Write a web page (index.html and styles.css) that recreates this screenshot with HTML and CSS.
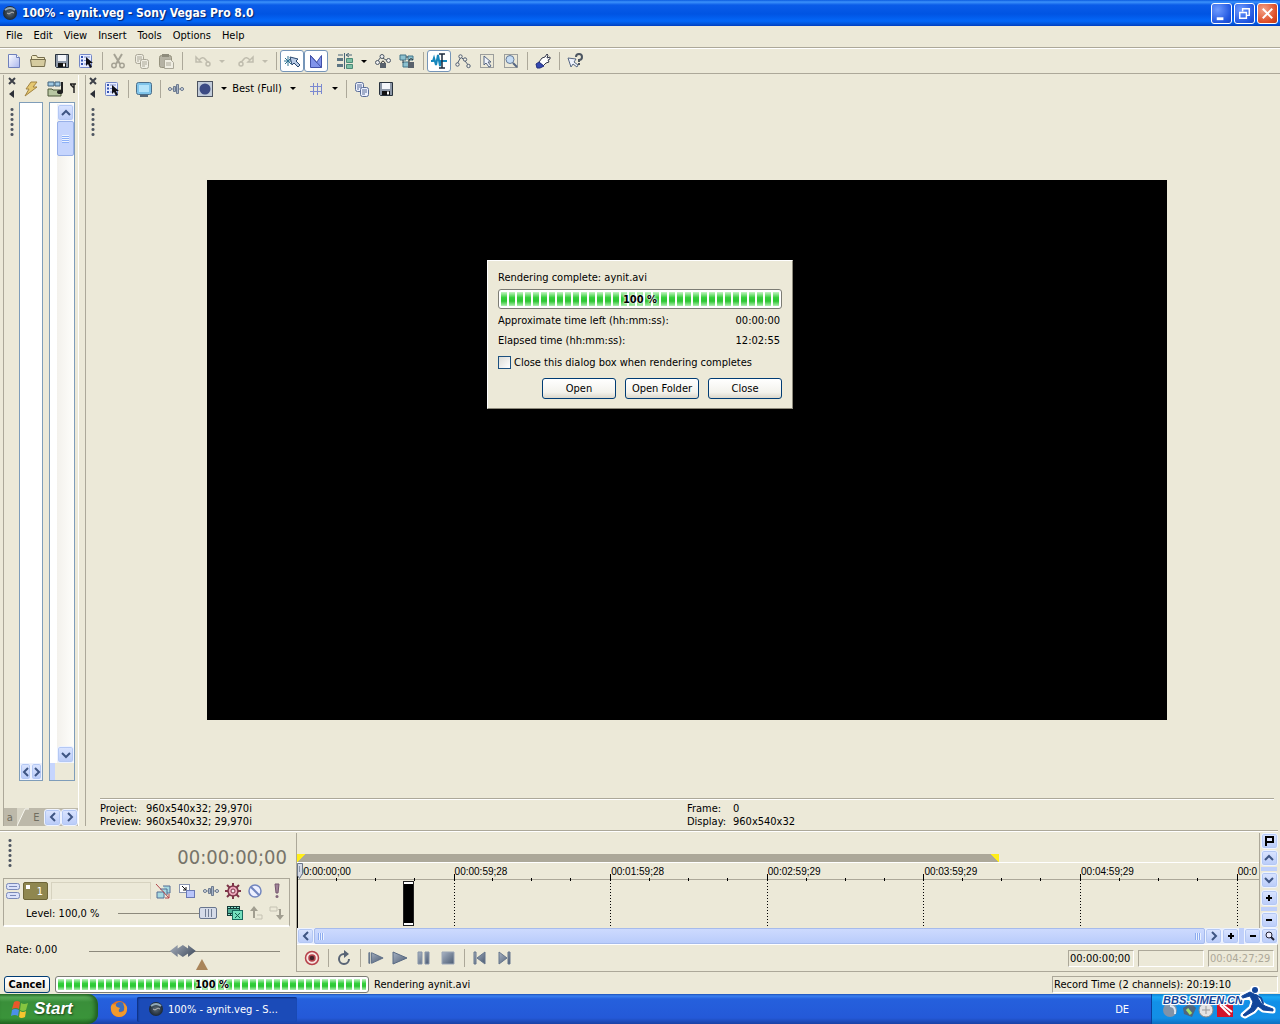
FILE: index.html
```html
<!DOCTYPE html>
<html lang="en">
<head>
<meta charset="utf-8">
<title>100% - aynit.veg - Sony Vegas Pro 8.0</title>
<link rel="stylesheet" href="styles.css">
</head>
<body>
<svg class="defs" aria-hidden="true">
  <defs>
    <linearGradient id="steel" x1="0" y1="0" x2="1" y2="1"><stop offset="0" stop-color="#a9b4c4"/><stop offset="1" stop-color="#4a5a72"/></linearGradient>
    <linearGradient id="page" x1="0" y1="0" x2="1" y2="1"><stop offset="0" stop-color="#fff"/><stop offset="1" stop-color="#a9b6ee"/></linearGradient>
    <radialGradient id="orb"><stop offset="0" stop-color="#5b6a78"/><stop offset="1" stop-color="#1b2733"/></radialGradient>
  </defs>
  <symbol id="app" viewBox="0 0 16 16"><circle cx="8" cy="8" r="7" fill="url(#orb)"/><path d="M3 5Q8 1 13 5" stroke="#91a9b8" stroke-width="2" fill="none"/><path d="M5 8l2 1 3-2 2 1" stroke="#b8b8b8" fill="none"/></symbol>
  <symbol id="new" viewBox="0 0 16 16"><path d="M2.500 1.500h8l3 3v10h-11z" fill="url(#page)" stroke="#6f80bb"/><path d="M10.500 1.500v3h3" fill="#fff" stroke="#6f80bb"/></symbol>
  <symbol id="open" viewBox="0 0 16 16"><path d="M1.500 13.500v-10l1-1h4l1 2h7v3" fill="#efe7c0" stroke="#756d4c"/><path d="M.5 6.500h15l-1 7h-13z" fill="#d5cb9f" stroke="#756d4c"/></symbol>
  <symbol id="save" viewBox="0 0 16 16"><path d="M1.500 1.500h13v13h-12l-1-1z" fill="#8d98a8" stroke="#28323d"/><path d="M4 2h8v6H4z" fill="#f4f6fa"/><path d="M4 10h8v4H4z" fill="#111"/><path d="M9 10.500h2v3H9z" fill="#fff"/></symbol>
  <symbol id="props" viewBox="0 0 16 16"><rect x="1.500" y="1.500" width="12" height="13" rx="1" fill="#e8edff" stroke="#7286c6"/><path d="M3 4h2M3 7.500h2M3 11h2" stroke="#3454b2" stroke-width="2"/><path d="M6 4h6M6 7.500h3M6 11h2" stroke="#8093cf"/><path d="M8 4v9l2-2 2 4 2-1-2-4h3z" fill="#101018"/></symbol>
  <symbol id="cut" viewBox="0 0 16 16"><path d="M4 1l6 10M12 1L6 11" stroke="#a5a294" stroke-width="2"/><circle cx="4" cy="12.500" r="2.200" fill="none" stroke="#a5a294" stroke-width="1.500"/><circle cx="12" cy="12.500" r="2.200" fill="none" stroke="#a5a294" stroke-width="1.500"/></symbol>
  <symbol id="copyg" viewBox="0 0 16 16"><g fill="#efede2" stroke="#aaa798"><rect x="1.500" y="1.500" width="8" height="9" rx="2"/><path d="M3 4h5M3 6h5M3 8h2"/><rect x="6.500" y="6.500" width="8" height="9" rx="2"/><path d="M8 9h5M8 11h5M8 13h3"/></g></symbol>
  <symbol id="copy" viewBox="0 0 16 16"><g fill="#edf1ff" stroke="#596d98"><rect x="1.500" y="1.500" width="8" height="9" rx="2"/><path d="M3 4h5M3 6h5M3 8h2"/><rect x="6.500" y="6.500" width="8" height="9" rx="2"/><path d="M8 9h5M8 11h5M8 13h3"/></g></symbol>
  <symbol id="paste" viewBox="0 0 16 16"><rect x="1.500" y="2.500" width="12" height="12" rx="2" fill="#b5b2a4" stroke="#96937f"/><rect x="4" y="1" width="7" height="3" fill="#8e8b7c"/><path d="M6.500 6.500h6l3 3v6h-9z" fill="#efede2" stroke="#aaa798"/><path d="M8 10h5M8 12h5" stroke="#aaa798"/></symbol>
  <symbol id="undo" viewBox="0 0 16 16"><path d="M1 4v5h5zM4 7Q8 3 10 6T14 9" fill="none" stroke="#c0bdae" stroke-width="1.500"/><circle cx="13" cy="11" r="2" fill="none" stroke="#c0bdae" stroke-width="1.500"/></symbol>
  <symbol id="redo" viewBox="0 0 16 16"><path d="M15 4v5h-5zM12 7Q8 3 6 6T2 9" fill="none" stroke="#c0bdae" stroke-width="1.500"/><circle cx="3" cy="11" r="2" fill="none" stroke="#c0bdae" stroke-width="1.500"/></symbol>
  <symbol id="snap" viewBox="0 0 16 16"><path d="M0 8h8M4 3v10M1 5l6 6M1 11l6-6" stroke="#2e7291"/><path d="M6 4l2 8 2-2 4 4 2-2-4-4 2-2z" fill="#b9cbe6" stroke="#2b4a70"/></symbol>
  <symbol id="fade" viewBox="0 0 16 16"><path d="M2.500 2.500v12h11v-12l-5 7z" fill="#8093ea" stroke="#4150a8"/><path d="M2.500 2.500l11 12" stroke="#4150a8"/></symbol>
  <symbol id="ripple" viewBox="0 0 16 16"><path d="M0 5h6v3H0zM0 11h6v3H0z" fill="#5d7684"/><path d="M9.500 5.500h6v4h-6zM9.500 11.500h6v4h-6z" fill="#7ec0a5" stroke="#4c8b78"/><path d="M7.500 0v16M1 2h5M9 2h6M12 0l-3 2 3 2" stroke="#486577" fill="none"/></symbol>
  <symbol id="lockenv" viewBox="0 0 16 16"><g fill="#eee" stroke="#4d5966"><path d="M2 9l4-5 5 3 3 1" fill="none"/><circle cx="2.500" cy="9.500" r="2"/><circle cx="7" cy="3.500" r="2"/><circle cx="13.500" cy="7.500" r="2"/></g><path d="M6 10q2-4 4 0" fill="none" stroke="#333"/><rect x="5" y="10" width="6" height="5" fill="#59626c"/></symbol>
  <symbol id="group" viewBox="0 0 16 16"><path d="M1 2h6v5H1zM9 3h5v4H9zM4 9h6v5H4z" fill="#8cc1cf" stroke="#427488"/><path d="M4 7v3M7 4h2" stroke="#345"/><path d="M10 10V7q2-3 4 0" fill="none" stroke="#333"/><rect x="9" y="9" width="6" height="6" fill="#59626c"/></symbol>
  <symbol id="edit" viewBox="0 0 16 16"><path d="M0 8h2l1-3 2 7 2-10 2 11 1-5h6" stroke="#1687bc" stroke-width="2" fill="none"/><path d="M8 1h6M11 1v14M8 15h6" stroke="#1c2a3c" stroke-width="1.500"/></symbol>
  <symbol id="env" viewBox="0 0 16 16"><g fill="#f5f3e8" stroke="#4f5c70"><path d="M2 11l4-7 4 4 4 5" fill="none"/><circle cx="2.500" cy="11.500" r="1.700"/><circle cx="5.500" cy="3.500" r="1.700"/><circle cx="10" cy="6.500" r="1.700"/><circle cx="13.500" cy="13" r="1.700"/></g></symbol>
  <symbol id="sel" viewBox="0 0 16 16"><rect x="1.500" y="1.500" width="13" height="13" fill="none" stroke="#4c5260" stroke-dasharray="1 1"/><path d="M5 3v9l2-2 3 4 2-1-3-4h3z" fill="#eef2fb" stroke="#566783"/></symbol>
  <symbol id="zoomsel" viewBox="0 0 16 16"><rect x="1.500" y="1.500" width="13" height="13" fill="none" stroke="#4c5260" stroke-dasharray="1 1"/><circle cx="7" cy="6.500" r="4" fill="#c5dcf4" stroke="#657a97"/><path d="M10 10l4 4" stroke="#566783" stroke-width="2"/></symbol>
  <symbol id="hand" viewBox="0 0 16 16"><path d="M4 9l3-4 3-1 2-3 1 1-1 3 3-1v2l-2 1 1 2-3 1-3 3z" fill="#fff" stroke="#35394c"/><path d="M1 11l3-2 5 4-4 2H2z" fill="#3448b0" stroke="#23307f"/></symbol>
  <symbol id="help" viewBox="0 0 16 16"><path d="M1 5l3 9 2-3 4 3 1-2-4-3 2-3z" fill="#eef2fb" stroke="#566783"/><path d="M9 4q0-3 3-3t3 3-3 3v2M12 10v2" fill="none" stroke="#4c5560" stroke-width="2"/></symbol>
  <symbol id="bolt" viewBox="0 0 16 16"><path d="M8 1h6l-4 5h4L2 15l4-7H3z" fill="#e5c871" stroke="#a28442"/></symbol>
  <symbol id="media" viewBox="0 0 16 16"><path d="M1 1h6v4H1zM8 1h5v4H8z" fill="#9fc9e2" stroke="#42637c"/><path d="M1 14V8h4l1 1h8v6H1z" fill="#b8c6a2" stroke="#4c583a"/><path d="M15 1v10" stroke="#222" stroke-width="2"/><ellipse cx="13" cy="11" rx="3" ry="2" fill="#222"/></symbol>
  <symbol id="corner" viewBox="0 0 6 16"><path d="M0 3h6M4 3v9M0 3l4 4" stroke="#222" fill="none" stroke-width="1.500"/></symbol>
  <symbol id="monitor" viewBox="0 0 16 16"><rect x=".5" y="1.500" width="15" height="12" rx="2" fill="#7fc4ea" stroke="#4b6f8b"/><path d="M3 4h10v7H3z" fill="#b5e4fa"/><path d="M4 15h8" stroke="#586877" stroke-width="2"/></symbol>
  <symbol id="fx" viewBox="0 0 16 16"><path d="M0 8h16" stroke="#7a879b"/><circle cx="2" cy="8" r="1.500" fill="#dde3ea" stroke="#68768a"/><circle cx="14" cy="8" r="1.500" fill="#dde3ea" stroke="#68768a"/><path d="M5.500 5.500h2v5h-2zM8.500 3.500h2v9h-2z" fill="#a8b5c8" stroke="#6d7b90"/></symbol>
  <symbol id="split" viewBox="0 0 16 16"><rect x=".5" y=".5" width="15" height="15" fill="#c2ccda" stroke="#4c5360"/><circle cx="8" cy="8" r="5.500" fill="#3c4b84"/></symbol>
  <symbol id="grid" viewBox="0 0 16 16"><path d="M5.500 2v12M9.500 2v12M2 5.500h12M2 10.500h12M13.500 3v10" stroke="#7b89d0"/></symbol>
  <symbol id="bypass" viewBox="0 0 16 16"><path d="M2 9h7v6H2zM5 6h7v6M8 3h7v7h-3" fill="#a7d9e0" stroke="#536c94"/><path d="M1 1l13 14M14 11v4h-4" stroke="#b2454c" fill="none"/></symbol>
  <symbol id="pan" viewBox="0 0 16 16"><rect x=".5" y="1.500" width="10" height="8" fill="#fff" stroke="#8894af"/><rect x="7.500" y="7.500" width="8" height="7" fill="#b9c5fa" stroke="#6a79b4"/><path d="M3 3l4 4M7 4v3H4" stroke="#111" fill="none"/></symbol>
  <symbol id="gear" viewBox="0 0 16 16"><path d="M8 0v16M0 8h16M2 2l12 12M2 14L14 2" stroke="#7d3448" stroke-width="2"/><circle cx="8" cy="8" r="5" fill="#eca5ba" stroke="#7d3448" stroke-width="1.500"/><circle cx="8" cy="8" r="2" fill="#f7e7eb" stroke="#7d3448"/></symbol>
  <symbol id="mute" viewBox="0 0 16 16"><circle cx="8" cy="8" r="6" fill="#edf0ff" stroke="#7286bf" stroke-width="1.500"/><path d="M4 4l8 8" stroke="#7286bf" stroke-width="2"/></symbol>
  <symbol id="solo" viewBox="0 0 16 16"><path d="M6 1h4L9 10H7z" fill="#a08398" stroke="#75566d"/><circle cx="8" cy="13.500" r="1.500" fill="#82667a"/></symbol>
  <symbol id="comp" viewBox="0 0 16 16"><path d="M0 1h13v10H0z" fill="#153a38"/><path d="M1 2.500h11M1 9.500h4" stroke="#8be3cc" stroke-dasharray="2 1"/><path d="M1 4h11v4H1z" fill="#4fae96"/><rect x="5.500" y="5.500" width="10" height="9" fill="#74dfbd" stroke="#186a5e"/><path d="M8 8l5 5M13 8l-5 5" stroke="#165e50"/></symbol>
  <symbol id="upar" viewBox="0 0 16 16"><path d="M1 6l4-5 4 5H6v7H4V6z" fill="#a19e90"/><path d="M8 10h5v4H6" fill="none" stroke="#c5c2b3"/></symbol>
  <symbol id="downar" viewBox="0 0 16 16"><path d="M1 2h7v4H1z" fill="none" stroke="#c5c2b3"/><path d="M9 4h3v6h3l-4 5-4-5h3V5z" fill="#a19e90"/></symbol>
  <symbol id="rec" viewBox="0 0 16 16"><circle cx="8" cy="8" r="6.500" fill="#f7e6e2" stroke="#b6414a" stroke-width="1.500"/><circle cx="8" cy="8" r="3" fill="#43242b" stroke="#b6414a" stroke-width="1.500"/></symbol>
  <symbol id="loop" viewBox="0 0 16 16"><path d="M8 4A5 5 0 1 0 13 9" fill="none" stroke="#586475" stroke-width="2"/><path d="M8 0l5 4-5 4z" fill="#586475"/></symbol>
  <symbol id="playall" viewBox="0 0 18 16"><path d="M1 2h1v12H1zM4 2l13 6-13 6z" fill="url(#steel)" stroke="#586a83"/></symbol>
  <symbol id="play" viewBox="0 0 16 16"><path d="M1 2l14 6-14 6z" fill="url(#steel)" stroke="#586a83"/></symbol>
  <symbol id="pause" viewBox="0 0 16 16"><path d="M2 2h4v12H2zM9 2h4v12H9z" fill="url(#steel)" stroke="#8794a8"/></symbol>
  <symbol id="stop" viewBox="0 0 16 16"><path d="M2 2h12v12H2z" fill="url(#steel)" stroke="#9ba6b6"/></symbol>
  <symbol id="first" viewBox="0 0 16 16"><path d="M2 2h2v12H2zM13 2v12L5 8z" fill="url(#steel)" stroke="#66768c"/></symbol>
  <symbol id="last" viewBox="0 0 16 16"><path d="M12 2h2v12h-2zM3 2v12l8-6z" fill="url(#steel)" stroke="#66768c"/></symbol>
  <symbol id="up" viewBox="0 0 12 12"><path d="M2 8l4-4 4 4" fill="none" stroke="#3e5583" stroke-width="2"/></symbol>
  <symbol id="down" viewBox="0 0 12 12"><path d="M2 4l4 4 4-4" fill="none" stroke="#3e5583" stroke-width="2"/></symbol>
  <symbol id="left" viewBox="0 0 12 12"><path d="M8 2L4 6l4 4" fill="none" stroke="#3e5583" stroke-width="2"/></symbol>
  <symbol id="right" viewBox="0 0 12 12"><path d="M4 2l4 4-4 4" fill="none" stroke="#3e5583" stroke-width="2"/></symbol>
  <symbol id="plus" viewBox="0 0 12 12"><path d="M6 3v6M3 6h6" stroke="#000" stroke-width="2"/></symbol>
  <symbol id="minus" viewBox="0 0 12 12"><path d="M3 6h6" stroke="#000" stroke-width="2"/></symbol>
  <symbol id="lens" viewBox="0 0 12 12"><circle cx="5" cy="5" r="3" fill="#eef" stroke="#223"/><path d="M7 7l3 3" stroke="#223" stroke-width="2"/></symbol>
  <symbol id="flag" viewBox="0 0 12 12"><path d="M3 11V2h7v5H3" fill="#dfe6ff" stroke="#000" stroke-width="2"/></symbol>
  <symbol id="close" viewBox="0 0 8 8"><path d="M1 1l6 6M7 1L1 7" stroke="#3c4048" stroke-width="2"/></symbol>
  <symbol id="tri" viewBox="0 0 8 8"><path d="M6 0v8L1 4z" fill="#2c3038"/></symbol>
</svg>

<header class="titlebar">
  <svg class="ic"><use href="#app"/></svg>
  <h1>100% - aynit.veg - Sony Vegas Pro 8.0</h1>
  <button class="win" aria-label="Minimize"><svg viewBox="0 0 20 20"><path d="M5 14h7v3H5z" fill="#fff"/></svg></button>
  <button class="win" aria-label="Restore"><svg viewBox="0 0 20 20"><path d="M8 8V5h7v7h-3" fill="none" stroke="#fff" stroke-width="1.500"/><path d="M5 9h7v6H5z" fill="none" stroke="#fff" stroke-width="1.500"/></svg></button>
  <button class="win red" aria-label="Close window"><svg viewBox="0 0 20 20"><path d="M5 5l10 10M15 5L5 15" stroke="#fff" stroke-width="2"/></svg></button>
</header>

<nav class="menubar">
  <button>File</button><button>Edit</button><button>View</button><button>Insert</button><button>Tools</button><button>Options</button><button>Help</button>
</nav>

<div class="toolbar">
  <button class="tb" aria-label="New"><svg class="ic"><use href="#new"/></svg></button>
  <button class="tb" aria-label="Open project"><svg class="ic"><use href="#open"/></svg></button>
  <button class="tb" aria-label="Save"><svg class="ic"><use href="#save"/></svg></button>
  <button class="tb" aria-label="Properties"><svg class="ic"><use href="#props"/></svg></button>
  <i class="sep"></i>
  <button class="tb" aria-label="Cut"><svg class="ic"><use href="#cut"/></svg></button>
  <button class="tb" aria-label="Copy"><svg class="ic"><use href="#copyg"/></svg></button>
  <button class="tb" aria-label="Paste"><svg class="ic"><use href="#paste"/></svg></button>
  <i class="sep"></i>
  <span class="combo off"><button class="tb" aria-label="Undo"><svg class="ic"><use href="#undo"/></svg></button><button class="drop" aria-label="Undo list"></button></span>
  <span class="combo off"><button class="tb" aria-label="Redo"><svg class="ic"><use href="#redo"/></svg></button><button class="drop" aria-label="Redo list"></button></span>
  <i class="sep"></i>
  <button class="tb on" aria-label="Snapping"><svg class="ic"><use href="#snap"/></svg></button>
  <button class="tb on" aria-label="Automatic crossfades"><svg class="ic"><use href="#fade"/></svg></button>
  <span class="combo"><button class="tb" aria-label="Auto ripple"><svg class="ic"><use href="#ripple"/></svg></button><button class="drop" aria-label="Ripple modes"></button></span>
  <button class="tb" aria-label="Lock envelopes"><svg class="ic"><use href="#lockenv"/></svg></button>
  <button class="tb" aria-label="Ignore grouping"><svg class="ic"><use href="#group"/></svg></button>
  <i class="sep"></i>
  <button class="tb on" aria-label="Normal edit"><svg class="ic"><use href="#edit"/></svg></button>
  <button class="tb" aria-label="Envelope edit"><svg class="ic"><use href="#env"/></svg></button>
  <button class="tb" aria-label="Selection edit"><svg class="ic"><use href="#sel"/></svg></button>
  <button class="tb" aria-label="Zoom edit"><svg class="ic"><use href="#zoomsel"/></svg></button>
  <i class="sep"></i>
  <button class="tb" aria-label="Tutorials"><svg class="ic"><use href="#hand"/></svg></button>
  <i class="sep"></i>
  <button class="tb" aria-label="What's this"><svg class="ic"><use href="#help"/></svg></button>
</div>

<main class="workspace">
  <aside class="dock">
    <div class="grip"><svg><use href="#close"/></svg><svg><use href="#tri"/></svg><i class="dots"></i></div>
    <div class="dockbody">
      <div class="docktools">
        <button class="tb" aria-label="Effects"><svg class="ic"><use href="#bolt"/></svg></button>
        <button class="tb" aria-label="Import media"><svg class="ic"><use href="#media"/></svg></button>
        <svg class="cut"><use href="#corner"/></svg>
      </div>
      <div class="lists">
        <div class="list tree"><div class="pair"><button class="sb" aria-label="Scroll left"><svg><use href="#left"/></svg></button><button class="sb" aria-label="Scroll right"><svg><use href="#right"/></svg></button></div></div>
        <div class="list files">
          <div class="vscroll"><button class="sb" aria-label="Scroll up"><svg><use href="#up"/></svg></button><i class="vthumb"></i><span class="fill"></span><button class="sb" aria-label="Scroll down"><svg><use href="#down"/></svg></button></div>
          <div class="stub"></div>
        </div>
      </div>
    </div>
    <div class="tabs"><span class="tab first">a</span><svg class="slant" viewBox="0 0 12 18"><path d="M0 18L8 1h4v17z" fill="#bdb9aa"/><path d="M0 18L8 1h4" stroke="#f8f7f0" fill="none"/></svg><span class="tab">E</span><button class="sb" aria-label="Previous tab"><svg><use href="#left"/></svg></button><button class="sb" aria-label="Next tab"><svg><use href="#right"/></svg></button></div>
  </aside>

  <section class="preview">
    <div class="grip"><svg><use href="#close"/></svg><svg><use href="#tri"/></svg><i class="dots"></i></div>
    <div class="pbody">
      <div class="ptools">
        <button class="tb" aria-label="Project video properties"><svg class="ic"><use href="#props"/></svg></button>
        <i class="sep"></i>
        <button class="tb" aria-label="External monitor"><svg class="ic"><use href="#monitor"/></svg></button>
        <i class="sep"></i>
        <button class="tb" aria-label="Video output FX"><svg class="ic"><use href="#fx"/></svg></button>
        <span class="combo"><button class="tb" aria-label="Split screen view"><svg class="ic"><use href="#split"/></svg></button><button class="drop" aria-label="Split modes"></button></span>
        <button class="quality">Best (Full)</button>
        <span class="combo"><button class="drop" aria-label="Quality list"></button><button class="tb" aria-label="Overlays"><svg class="ic"><use href="#grid"/></svg></button><button class="drop" aria-label="Overlay list"></button></span>
        <i class="sep"></i>
        <button class="tb" aria-label="Copy snapshot"><svg class="ic"><use href="#copy"/></svg></button>
        <button class="tb" aria-label="Save snapshot"><svg class="ic"><use href="#save"/></svg></button>
      </div>
      <div class="stage"><div class="video"></div></div>
      <div class="info">
        <dl><dt>Project:</dt><dd>960x540x32; 29,970i</dd><dt>Preview:</dt><dd>960x540x32; 29,970i</dd></dl>
        <dl><dt>Frame:</dt><dd>0</dd><dt>Display:</dt><dd>960x540x32</dd></dl>
      </div>
    </div>
  </section>
</main>

<section class="timeline">
  <div class="heads">
    <div class="clock"><i class="dots"></i><output>00:00:00;00</output></div>
    <div class="track">
      <div class="trow">
        <svg class="mm" viewBox="0 0 14 16"><g fill="#dbe2fa" stroke="#7a89b8"><rect x=".5" y=".5" width="13" height="6" rx="2"/><rect x=".5" y="9.500" width="13" height="6" rx="2"/><path d="M3 3.500h8M4 12.500h6"/></g></svg>
        <span class="num">1</span>
        <input class="name" type="text" aria-label="Track name">
        <button class="tb" aria-label="Bypass motion blur"><svg class="ic"><use href="#bypass"/></svg></button>
        <button class="tb" aria-label="Track motion"><svg class="ic"><use href="#pan"/></svg></button>
        <button class="tb" aria-label="Track FX"><svg class="ic"><use href="#fx"/></svg></button>
        <button class="tb slim" aria-label="Automation"><svg class="ic"><use href="#gear"/></svg></button>
        <button class="tb" aria-label="Mute"><svg class="ic"><use href="#mute"/></svg></button>
        <button class="tb slim" aria-label="Solo"><svg class="ic"><use href="#solo"/></svg></button>
      </div>
      <div class="trow level">
        <label for="level">Level: 100,0 %</label>
        <input id="level" type="range" min="0" max="100" value="100">
        <button class="tb" aria-label="Compositing mode"><svg class="ic"><use href="#comp"/></svg></button>
        <button class="tb slim" aria-label="Make parent"><svg class="ic"><use href="#upar"/></svg></button>
        <button class="tb slim" aria-label="Make child"><svg class="ic"><use href="#downar"/></svg></button>
      </div>
    </div>
    <div class="rate">
      <label for="rate">Rate: 0,00</label>
      <div class="ratebox"><input id="rate" type="range" min="0" max="100" value="49"><i class="peg"></i></div>
    </div>
  </div>

  <div class="tracks">
    <div class="upper">
      <div class="lanes">
        <div class="marker"><div class="region"></div></div>
        <div class="ruler">
          <span>00:00:00;00</span><span>00:00:59;28</span><span>00:01:59;28</span><span>00:02:59;29</span><span>00:03:59;29</span><span>00:04:59;29</span><span>00:0</span>
          <svg class="head" viewBox="0 0 7 16"><path d="M.5.500h5v10l-3 5-2-3z" fill="#d3d8e3" stroke="#6b7688"/><path d="M2.500 3v6" stroke="#8b96a8"/></svg>
        </div>
        <div class="lane"><i></i><i></i><i></i><i></i><i></i><i></i><i></i><div class="clip"></div></div>
      </div>
      <div class="vtools">
        <button class="sb" aria-label="Marker tool"><svg><use href="#flag"/></svg></button>
        <button class="sb" aria-label="Tracks up"><svg><use href="#up"/></svg></button>
        <i class="bar"></i>
        <button class="sb" aria-label="Tracks down"><svg><use href="#down"/></svg></button>
        <button class="sb" aria-label="Taller tracks"><svg><use href="#plus"/></svg></button>
        <i class="bar"></i>
        <button class="sb" aria-label="Shorter tracks"><svg><use href="#minus"/></svg></button>
      </div>
    </div>
    <div class="hscroll">
      <button class="sb" aria-label="Timeline left"><svg><use href="#left"/></svg></button>
      <div class="hthumb"></div>
      <button class="sb" aria-label="Timeline right"><svg><use href="#right"/></svg></button>
      <button class="sb" aria-label="Zoom in"><svg><use href="#plus"/></svg></button>
      <i class="vbar"></i>
      <button class="sb" aria-label="Zoom out"><svg><use href="#minus"/></svg></button>
      <button class="sb" aria-label="Zoom tool"><svg><use href="#lens"/></svg></button>
    </div>
    <div class="transport">
      <button class="tb" aria-label="Record"><svg class="ic"><use href="#rec"/></svg></button><i class="sep"></i>
      <button class="tb" aria-label="Loop"><svg class="ic"><use href="#loop"/></svg></button><i class="sep"></i>
      <button class="tb" aria-label="Play from start"><svg class="ic"><use href="#playall"/></svg></button>
      <button class="tb" aria-label="Play"><svg class="ic"><use href="#play"/></svg></button>
      <button class="tb" aria-label="Pause"><svg class="ic"><use href="#pause"/></svg></button>
      <button class="tb" aria-label="Stop"><svg class="ic"><use href="#stop"/></svg></button><i class="sep"></i>
      <button class="tb" aria-label="Go to start"><svg class="ic"><use href="#first"/></svg></button>
      <button class="tb" aria-label="Go to end"><svg class="ic"><use href="#last"/></svg></button>
      <div class="times"><output>00:00:00;00</output><output></output><output class="dim">00:04:27;29</output></div>
    </div>
  </div>
</section>

<div class="status">
  <button class="push cancel">Cancel</button>
  <div class="progress" role="progressbar" aria-valuenow="100"><b>100 %</b></div>
  <span class="msg">Rendering aynit.avi</span>
  <span class="rectime">Record Time (2 channels): 20:19:10</span>
</div>

<footer class="taskbar">
  <button class="start"><svg viewBox="0 0 20 20"><path d="M4 3q3-2 6 0L9 10q-3-2-7 0z" fill="#e8572b"/><path d="M11 4q3 2 7 0l-2 7q-3 2-6 0z" fill="#86c440"/><path d="M2 11q3-2 7 0l-1 6q-3-2-7 0z" fill="#4c8fe8"/><path d="M10 12q3 2 6 0l-1 6q-4 2-6 0z" fill="#f6c52f"/></svg>Start</button>
  <button class="quick" aria-label="Firefox"><svg viewBox="0 0 18 18"><circle cx="9" cy="9" r="8" fill="#e8731c"/><circle cx="10" cy="7" r="5" fill="#3a6fc0"/><path d="M2 4q2 1 4 0-1 2 1 3l3 1q-2 2-1 4 3 1 5-1 1-4-1-8 5 3 4 7-1 7-8 7-7-1-8-7-1-3 1-6z" fill="#f19a2e"/></svg></button>
  <button class="task"><svg class="ic"><use href="#app"/></svg>100% - aynit.veg - S...</button>
  <span class="lang">DE</span>
  <div class="tray">
    <svg class="trayicons" viewBox="0 0 90 18"><circle cx="9" cy="9" r="7" fill="#8293a8"/><path d="M9 5q6 0 5 8" stroke="#dde7f2" stroke-width="2" fill="none"/><path d="M22 7l8-5 5 5-4 9-8-3z" fill="#51657a"/><path d="M26 8l4 5" stroke="#9fe06a" stroke-width="3"/><circle cx="45" cy="9" r="7" fill="#e4e4e4" stroke="#888"/><path d="M41 9h8M45 5v8" stroke="#999"/><path d="M56 3h16v13H56z" fill="#d3132b"/><path d="M59 4l10 10M62 4l9 7" stroke="#fff" stroke-width="2"/></svg>
    <div class="mark"><span>BBS.SIMEN.CN</span><svg viewBox="0 0 36 34"><g stroke-linecap="round" stroke-linejoin="round"><path d="M2 10l8-4 6 3 5 8 4 3 8 3v2l-10-1-5-4-4 5-9 5-2-1 8-7 2-6-3-6-7 2z" fill="#fff" stroke="#fff" stroke-width="5"/><circle cx="15" cy="4" r="5" fill="#fff"/><path d="M2 10l8-4 6 3 5 8 4 3 8 3v2l-10-1-5-4-4 5-9 5-2-1 8-7 2-6-3-6-7 2z" fill="#12459a" stroke="#12459a"/><path d="M16 9l5 3 2 5" fill="none" stroke="#12459a" stroke-width="2"/><circle cx="15" cy="4" r="3" fill="#12459a"/></g></svg></div>
  </div>
</footer>

<section class="dialog" role="dialog" aria-label="Rendering complete">
  <p>Rendering complete: aynit.avi</p>
  <div class="progress" role="progressbar" aria-valuenow="100"><b>100 %</b></div>
  <div class="line"><span>Approximate time left (hh:mm:ss):</span><span>00:00:00</span></div>
  <div class="line"><span>Elapsed time (hh:mm:ss):</span><span>12:02:55</span></div>
  <label class="check"><input type="checkbox">Close this dialog box when rendering completes</label>
  <div class="actions"><button class="push">Open</button><button class="push">Open Folder</button><button class="push">Close</button></div>
</section>
</body>
</html>
```
FILE: styles.css
```css
:root {
  --face: #ece9d8;
  --shade: #aca899;
  --ui: Tahoma, "DejaVu Sans Condensed", "Liberation Sans", sans-serif;
}
* { box-sizing: border-box; }
body {
  margin: 0;
  min-height: 100vh;
  display: flex;
  flex-direction: column;
  background: var(--face);
  font: 11px/13px var(--ui);
  color: #000;
  overflow: hidden;
}
button, input { font: inherit; color: inherit; margin: 0; }
button { border: 0; background: none; padding: 0; white-space: nowrap; }
svg { display: block; flex: none; }
.defs { position: absolute; width: 0; height: 0; }
.ic { width: 16px; height: 16px; }

.titlebar {
  height: 26px;
  display: flex;
  align-items: center;
  gap: 2px;
  padding: 0 2px;
  background: linear-gradient(#0a5be0 0, #3c92fb 2px, #0a5ce8 5px, #0054e3 14px, #0467f8 21px, #0354d8 24px, #003dc0);
}
.titlebar h1 {
  flex: 1;
  margin: 0 0 0 2px;
  font: bold 12px/16px var(--ui);
  color: #fff;
  text-shadow: 1px 1px 1px #0a246a;
}
.win {
  width: 21px;
  height: 21px;
  border: 1px solid #fff;
  border-radius: 3px;
  background: radial-gradient(circle at 30% 30%, #6f9bff, #2157e0 70%, #1a45c4);
}
.win.red { background: radial-gradient(circle at 30% 30%, #f4a287, #dd4b24 70%, #b83a18); }

.menubar { height: 22px; display: flex; align-items: center; padding: 0 6px 3px; gap: 11px; border-bottom: 1px solid var(--shade); }

.toolbar { height: 26px; display: flex; align-items: center; padding: 0 2px; border-top: 1px solid #fff; border-bottom: 1px solid var(--shade); }
.tb { width: 24px; height: 22px; flex: none; display: flex; align-items: center; justify-content: center; }
.tb.on { background: #fff; border: 1px solid #7595b8; border-radius: 3px; }
.tb.slim { width: 20px; }
.sep { width: 8px; height: 18px; flex: none; background: linear-gradient(var(--shade), var(--shade)) 4px 0 / 1px 100% no-repeat; }
.combo { display: flex; margin-left: 5px; }
.drop { width: 14px; display: flex; align-items: center; justify-content: center; }
.drop::before { content: ""; border: 3px solid transparent; border-top-color: #000; border-bottom: 0; }
.off .drop::before { border-top-color: #c0bdae; }

.workspace { flex: 1; display: flex; min-height: 300px; }
.grip { display: flex; flex-direction: column; align-items: center; gap: 5px; width: 15px; padding-top: 2px; flex: none; }
.grip svg { width: 8px; height: 8px; }
.dots { width: 4px; height: 29px; margin-top: 4px; background: radial-gradient(circle, #4e5661 1px, transparent 2px) 0 0 / 4px 5px; }

.dock {
  width: 76px;
  margin: 1px 6px 4px 3px;
  display: grid;
  grid-template: 1fr 18px / 15px 1fr;
  border-left: 1px solid var(--shade);
  border-right: 1px solid #fff;
}
.dockbody { display: flex; flex-direction: column; padding-bottom: 27px; min-width: 0; }
.docktools { display: flex; align-items: center; height: 27px; overflow: hidden; }
.cut { width: 6px; height: 16px; margin-left: 3px; }
.lists { flex: 1; display: flex; gap: 6px; }
.list { background: #fff; border: 1px solid #7f9db9; display: flex; flex-direction: column; }
.tree { width: 24px; justify-content: flex-end; }
.pair { display: flex; height: 17px; background: #eef1fb; }
.pair .sb { width: 11px; }
.files { width: 26px; }
.vscroll { flex: 1; display: flex; flex-direction: column; width: 17px; margin: 1px 0 0 7px; background: linear-gradient(90deg, #f3f1ec, #fefefb); }
.fill { flex: 1; }
.vthumb { height: 35px; border: 1px solid #98b0e8; border-radius: 2px; background: repeating-linear-gradient(#eef4fe 0 1px, #8cb0f8 1px 2px) center / 7px 8px no-repeat, #c6d5fd; }
.stub { height: 17px; background: linear-gradient(90deg, #c6d5fd 5px, var(--face) 5px); }
.sb {
  width: 17px;
  height: 17px;
  flex: none;
  display: flex;
  align-items: center;
  justify-content: center;
  border: 1px solid #eef3ff;
  border-radius: 3px;
  background: linear-gradient(#dbe5ff, #b9cbf8);
  box-shadow: inset 0 0 0 1px #b4c8f4;
}
.sb svg { width: 12px; height: 12px; }
.tabs { grid-column: 1 / 3; display: flex; align-items: center; background: #bdb9aa; color: #706d60; }
.tabs .tab { width: 16px; text-align: center; }
.tabs .tab.first { width: 12px; }
.slant { width: 12px; height: 18px; margin-left: 1px; background: #d8d5c6; }

.preview { flex: 1; display: flex; border-left: 1px solid var(--shade); margin: 1px 0 4px; min-width: 0; }
.preview .grip { width: 14px; }
.pbody { flex: 1; min-width: 0; display: flex; flex-direction: column; padding-right: 6px; }
.ptools { height: 27px; display: flex; align-items: center; }
.quality { width: 50px; margin-left: 1px; }
.quality + .combo { margin-left: 4px; }
.quality + .combo .tb { margin-left: 4px; }
.stage { flex: 1; display: flex; align-items: center; justify-content: center; }
.video { width: 82%; max-width: 960px; aspect-ratio: 16 / 9; background: #000; }
.info { display: grid; grid-template-columns: 1fr 1fr; height: 28px; border-top: 1px solid var(--shade); box-shadow: inset 0 1px #fff; padding-top: 3px; }
.info dl { display: grid; grid-template-columns: 46px 1fr; margin: 0; }
.info dd { margin: 0; }

.timeline { display: grid; grid-template-columns: 296px 1fr; height: 142px; margin: 0 2px 0 0; border-top: 1px solid var(--shade); box-shadow: inset 0 1px #fff; }
.heads { display: flex; flex-direction: column; padding: 3px 6px 0 3px; }
.clock { display: flex; justify-content: space-between; height: 44px; padding: 0 3px 0 5px; }
.clock output { font-size: 20px; line-height: 46px; color: #77746a; }
.track { height: 49px; border: 1px solid var(--shade); border-bottom: 2px solid #fff; padding: 1px 2px; }
.trow { display: flex; align-items: center; height: 22px; }
.mm { width: 14px; height: 16px; }
.num { width: 25px; height: 18px; margin: 0 3px; border: 1px solid #6d6537; border-radius: 2px; background: linear-gradient(#fff, #fff) 2px 2px / 4px 4px no-repeat, #8f874f; color: #fff; text-align: right; line-height: 17px; padding-right: 4px; }
.name { flex: 1; min-width: 0; height: 18px; border: 1px solid #d6d2bf; border-bottom-color: #f6f4ea; background: none; }
.level { padding-left: 20px; }
.level label { width: 92px; }
input[type="range"] { appearance: none; background: linear-gradient(#8c897c, #8c897c) center / 100% 1px no-repeat; height: 16px; min-width: 0; }
#level { width: 100px; margin-right: 6px; }
#level::-webkit-slider-thumb { appearance: none; width: 18px; height: 12px; border: 1px solid #68758e; border-radius: 2px; background: repeating-linear-gradient(90deg, #717d94 0 1px, transparent 1px 3px) center / 7px 8px no-repeat, #d5dbe8; }
.rate { display: flex; align-items: flex-start; padding: 16px 10px 0 3px; }
.rate label { width: 83px; }
.ratebox { flex: 1; display: flex; flex-direction: column; }
#rate::-webkit-slider-thumb { appearance: none; width: 26px; height: 12px; background: linear-gradient(135deg, #a5adba, #3e4a5b); clip-path: polygon(0 50%, 30% 0, 30% 30%, 50% 0, 70% 30%, 70% 0, 100% 50%, 70% 100%, 70% 70%, 50% 100%, 30% 70%, 30% 100%); }
#rate { width: 100%; }
.peg { width: 12px; height: 11px; margin-left: 56%; background: #a9855a; clip-path: polygon(50% 0, 100% 100%, 0 100%); }

.tracks { display: flex; flex-direction: column; border-left: 1px solid var(--shade); border-bottom: 1px solid var(--shade); min-width: 0; margin-top: 2px; }
.upper { display: flex; height: 95px; }
.lanes { flex: 1; min-width: 0; display: flex; flex-direction: column; border-right: 1px solid var(--shade); }
.marker { height: 30px; padding-top: 21px; border-bottom: 1px solid #fff; }
.region { width: 73%; height: 8px; background: linear-gradient(135deg, #ffee1a 6px, transparent 6px) left / 8px 8px no-repeat, linear-gradient(225deg, #ffee1a 6px, transparent 6px) right / 8px 8px no-repeat, var(--shade); }
.ruler, .lane { display: grid; grid-template-columns: repeat(6, 7fr) 1fr; position: relative; }
.ruler { height: 17px; border-bottom: 1px solid var(--shade); font: 10px/18px "Liberation Sans", sans-serif; }
.ruler span {
  min-width: 0;
  padding-left: 1px;
  white-space: nowrap;
  background:
    linear-gradient(#000, #000) 0 100% / 1px 7px no-repeat,
    linear-gradient(#000, #000) 25% 100% / 1px 3px no-repeat,
    linear-gradient(#000, #000) 50% 100% / 1px 3px no-repeat,
    linear-gradient(#000, #000) 75% 100% / 1px 3px no-repeat;
}
.ruler span:last-of-type { background: linear-gradient(#000, #000) 0 100% / 1px 7px no-repeat; }
.head { position: absolute; left: 0; top: 0; width: 7px; height: 16px; }
.lane { flex: 1; }
.lane i { background: repeating-linear-gradient(#000 0 1px, transparent 1px 3px) 0 0 / 1px 100% no-repeat; }
.lane i:first-child { background: linear-gradient(#000, #000) 0 0 / 1px 100% no-repeat; }
.clip { position: absolute; left: 11%; top: 1px; width: 11px; height: 45px; border: 1px solid #222; background: linear-gradient(#fff 2px, #000 2px calc(100% - 2px), #fff 0); }
.vtools { width: 18px; display: flex; flex-direction: column; justify-content: space-between; align-items: center; }
.vtools .sb { height: 16px; }
.bar { width: 16px; height: 4px; background: #c0d0fa; }
.hscroll { display: flex; height: 16px; background: #e8edfb; }
.hscroll .sb { height: 16px; }
.hthumb { flex: 1; border: 1px solid #a6bbec; border-radius: 2px; background: repeating-linear-gradient(90deg, #8cabef 0 1px, #eaf1ff 1px 2px) 3px 4px / 6px 7px no-repeat, repeating-linear-gradient(90deg, #8cabef 0 1px, #eaf1ff 1px 2px) calc(100% - 3px) 4px / 6px 7px no-repeat, linear-gradient(#cddafe, #b9ccfb); }
.vbar { width: 5px; background: #c0d0fa; }
.transport { flex: 1; display: flex; align-items: center; padding: 0 3px; border-top: 1px solid #fff; border-right: 1px solid var(--shade); }
.times { margin-left: auto; display: flex; gap: 4px; }
.times output { width: 66px; height: 17px; padding: 1px; border: 1px solid; border-color: var(--shade) #fff #fff var(--shade); white-space: nowrap; }
.dim { color: #aca899; }

.status { display: flex; align-items: center; height: 22px; gap: 5px; padding: 2px 2px 0 4px; }
.push { height: 21px; border: 1px solid #003c74; border-radius: 3px; background: linear-gradient(#fff, #f3f2ec 70%, #dcd8cb); }
.cancel { width: 46px; height: 17px; font-weight: bold; }
.progress {
  height: 18px;
  border: 1px solid #7c7c74;
  border-radius: 3px;
  padding: 2px;
  display: flex;
  align-items: center;
  justify-content: center;
  background:
    repeating-linear-gradient(90deg, #fff0 0 6px, #fff 6px 8px) content-box,
    linear-gradient(#c5f5c5, #35cf3b 40%, #2cc632 65%, #b0efb0) content-box,
    #fff;
}
.progress b { text-shadow: 0 0 2px #fff, 0 0 2px #fff, 0 0 3px #fff; }
.status .progress { width: 314px; height: 17px; }
.msg { flex: 1; }
.rectime { width: 226px; height: 17px; padding: 1px; border: 1px solid; border-color: var(--shade) #fff #fff var(--shade); }

.taskbar { height: 30px; display: flex; align-items: center; background: linear-gradient(#1c50b8 0, #3a80f0 2px, #2560dd 5px, #2459d8 24px, #1941a5); color: #fff; }
.start { width: 98px; height: 30px; display: flex; align-items: center; gap: 4px; padding-left: 10px; border-radius: 0 10px 10px 0; background: linear-gradient(#2f7a2f, #59ab59 3px, #3a8f3a 8px, #3a943a 24px, #246b24); box-shadow: inset -3px 0 4px #1f5c1f; font: italic bold 17px/20px "Liberation Sans", sans-serif; text-shadow: 1px 1px 2px #1a401a; }
.start svg { width: 20px; height: 20px; }
.quick { margin: 0 9px 0 12px; }
.quick svg { width: 18px; height: 18px; }
.task { width: 160px; height: 25px; display: flex; align-items: center; gap: 4px; padding-left: 11px; border-radius: 2px; background: #1b4bb8; box-shadow: inset 1px 1px 2px #0c2c78; }
.lang { margin-left: auto; margin-right: 22px; }
.tray { width: 129px; height: 30px; position: relative; background: linear-gradient(#1180d0, #19a8f5 3px, #1290e8 8px, #128fe6 24px, #0d6fc0); border-left: 1px solid #0b3f9c; padding: 7px 0 0 9px; }
.trayicons { width: 90px; height: 18px; }
.mark { position: absolute; left: 11px; top: -8px; display: flex; align-items: flex-start; }
.mark span { margin-top: 6px; font: italic bold 11px/16px "Liberation Sans", sans-serif; color: #12459a; text-shadow: 1px 0 #fff, -1px 0 #fff, 0 1px #fff, 0 -1px #fff, 1px 1px #fff, -1px -1px #fff, 1px -1px #fff, -1px 1px #fff, 0 0 3px #fff; }
.mark svg { width: 36px; height: 34px; margin-left: -3px; }

.dialog { position: absolute; left: 50%; top: 260px; width: 306px; transform: translateX(-50%); padding: 10px 10px 9px; background: var(--face); border: 1px solid; border-color: #fff #8d8a7c #8d8a7c #fff; }
.dialog p { margin: 0 0 5px; }
.dialog .progress { height: 20px; margin-bottom: 5px; }
.line { display: flex; justify-content: space-between; padding-right: 2px; margin-bottom: 7px; }
.check { display: flex; align-items: center; gap: 3px; height: 16px; white-space: nowrap; }
.check input { appearance: none; width: 13px; height: 13px; border: 1px solid #1c5180; background: linear-gradient(135deg, #dcdcd7, #fff); }
.actions { display: flex; justify-content: flex-end; gap: 9px; margin-top: 8px; }
.actions .push { width: 74px; }
```
